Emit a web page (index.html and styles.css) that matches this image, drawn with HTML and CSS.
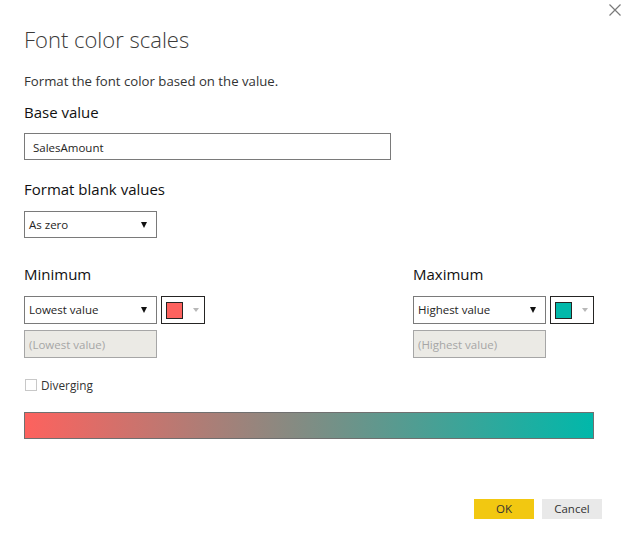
FILE: index.html
```html
<!DOCTYPE html>
<html lang="en">
<head>
<meta charset="utf-8">
<title>Font color scales</title>
<link rel="stylesheet" href="styles.css">
</head>
<body>
<div class="dialog">
  <button class="close" aria-label="Close">
    <svg width="12" height="12" viewBox="0 0 12 12"><path d="M0.5 0.5 L11.5 11.5 M11.5 0.5 L0.5 11.5" stroke="#7a7a7a" stroke-width="1.2" fill="none"/></svg>
  </button>
  <h1 class="title">Font color scales</h1>
  <p class="subtitle">Format the font color based on the value.</p>
  <div class="label label-base">Base value</div>
  <div class="field field-base">SalesAmount</div>
  <div class="label label-blank">Format blank values</div>
  <div class="field select select-blank"><span>As zero</span><span class="caret"></span></div>
  <div class="columns">
    <div class="col">
      <div class="label">Minimum</div>
      <div class="pick-row">
        <div class="field select"><span>Lowest value</span><span class="caret"></span></div>
        <div class="color-btn"><span class="swatch swatch-red"></span><span class="caret-light"></span></div>
      </div>
      <div class="field disabled">(Lowest value)</div>
    </div>
    <div class="col">
      <div class="label">Maximum</div>
      <div class="pick-row">
        <div class="field select"><span>Highest value</span><span class="caret"></span></div>
        <div class="color-btn"><span class="swatch swatch-teal"></span><span class="caret-light"></span></div>
      </div>
      <div class="field disabled">(Highest value)</div>
    </div>
  </div>
  <label class="check"><span class="box"></span><span>Diverging</span></label>
  <div class="gradient"></div>
  <div class="footer">
    <button class="btn btn-ok">OK</button>
    <button class="btn btn-cancel">Cancel</button>
  </div>
</div>
</body>
</html>
```
FILE: styles.css
```css
* { box-sizing: border-box; }
html, body { margin: 0; padding: 0; background: #fff; }
body {
  font-family: "Open Sans", "Noto Sans", "Liberation Sans", sans-serif;
  color: #252423;
  width: 624px;
  height: 541px;
  overflow: hidden;
}
.dialog {
  position: relative;
  padding: 23px 30px 0 24px;
  height: 541px;
}
.close {
  position: absolute;
  top: 4px;
  left: 609px;
  width: 12px;
  height: 12px;
  padding: 0;
  border: 0;
  background: transparent;
  display: block;
}
.close svg { display: block; }
.title {
  margin: 0;
  font-size: 22px;
  font-weight: 300;
  line-height: 33px;
  height: 32px;
  color: #3b3a39;
}
.subtitle {
  margin: 16px 0 0;
  font-size: 13.2px;
  line-height: 20px;
  height: 18px;
  color: #333;
}
.label {
  font-size: 15px;
  line-height: 21px;
  height: 20px;
  color: #111;
}
.label-base { margin-top: 13px; }
.field {
  height: 27px;
  border: 1px solid #7a7a7a;
  font-size: 11.5px;
  line-height: 27px;
  padding: 0 4px;
  color: #252423;
  background: #fff;
  white-space: nowrap;
}
.field-base {
  margin-top: 11px;
  width: 367px;
  padding-left: 8px;
}
.label-blank { margin-top: 19px; }
.select {
  display: flex;
  align-items: center;
  justify-content: space-between;
  width: 133px;
  padding-right: 9px;
}
.select-blank { margin-top: 12px; }
.caret {
  width: 0;
  height: 0;
  border-left: 3px solid transparent;
  border-right: 3px solid transparent;
  border-top: 6px solid #111;
}
.columns {
  display: flex;
  justify-content: space-between;
  width: 570px;
  margin-top: 26px;
}
.col { width: 181px; }
.pick-row {
  display: flex;
  gap: 4px;
  margin-top: 12px;
}
.pick-row .select { height: 28px; line-height: 28px; }
.color-btn {
  width: 44px;
  height: 28px;
  border: 1px solid #252423;
  display: flex;
  align-items: center;
  padding-left: 4px;
  gap: 10px;
}
.swatch {
  width: 17px;
  height: 17px;
  border: 1px solid #252423;
  display: block;
}
.swatch-red { background: #fd625e; }
.swatch-teal { background: #01b8aa; }
.caret-light {
  width: 0;
  height: 0;
  border-left: 3px solid transparent;
  border-right: 3px solid transparent;
  border-top: 4px solid #b8b8b8;
}
.disabled {
  margin-top: 6px;
  width: 133px;
  height: 28px;
  line-height: 28px;
  background: #ebeae5;
  border-color: #a6a6a6;
  color: #a6a6a6;
}
.check {
  display: flex;
  align-items: center;
  gap: 4px;
  margin-top: 20px;
  margin-left: 1px;
  height: 14px;
  font-size: 11.8px;
  color: #333;
}
.box {
  width: 12px;
  height: 12px;
  border: 1px solid #c8c8c8;
  display: block;
}
.gradient {
  margin-top: 20px;
  width: 570px;
  height: 27px;
  border: 1px solid #707070;
  background: linear-gradient(to right, #fd625e, #01b8aa);
}
.footer {
  display: flex;
  justify-content: flex-end;
  gap: 8px;
  margin-top: 60px;
  margin-right: -8px;
}
.btn {
  width: 60px;
  height: 20px;
  border: 0;
  padding: 0;
  font-family: inherit;
  font-size: 11.5px;
  line-height: 20px;
  color: #333;
}
.btn-ok { background: #f2c811; }
.btn-cancel { background: #e9e9e9; }
```
